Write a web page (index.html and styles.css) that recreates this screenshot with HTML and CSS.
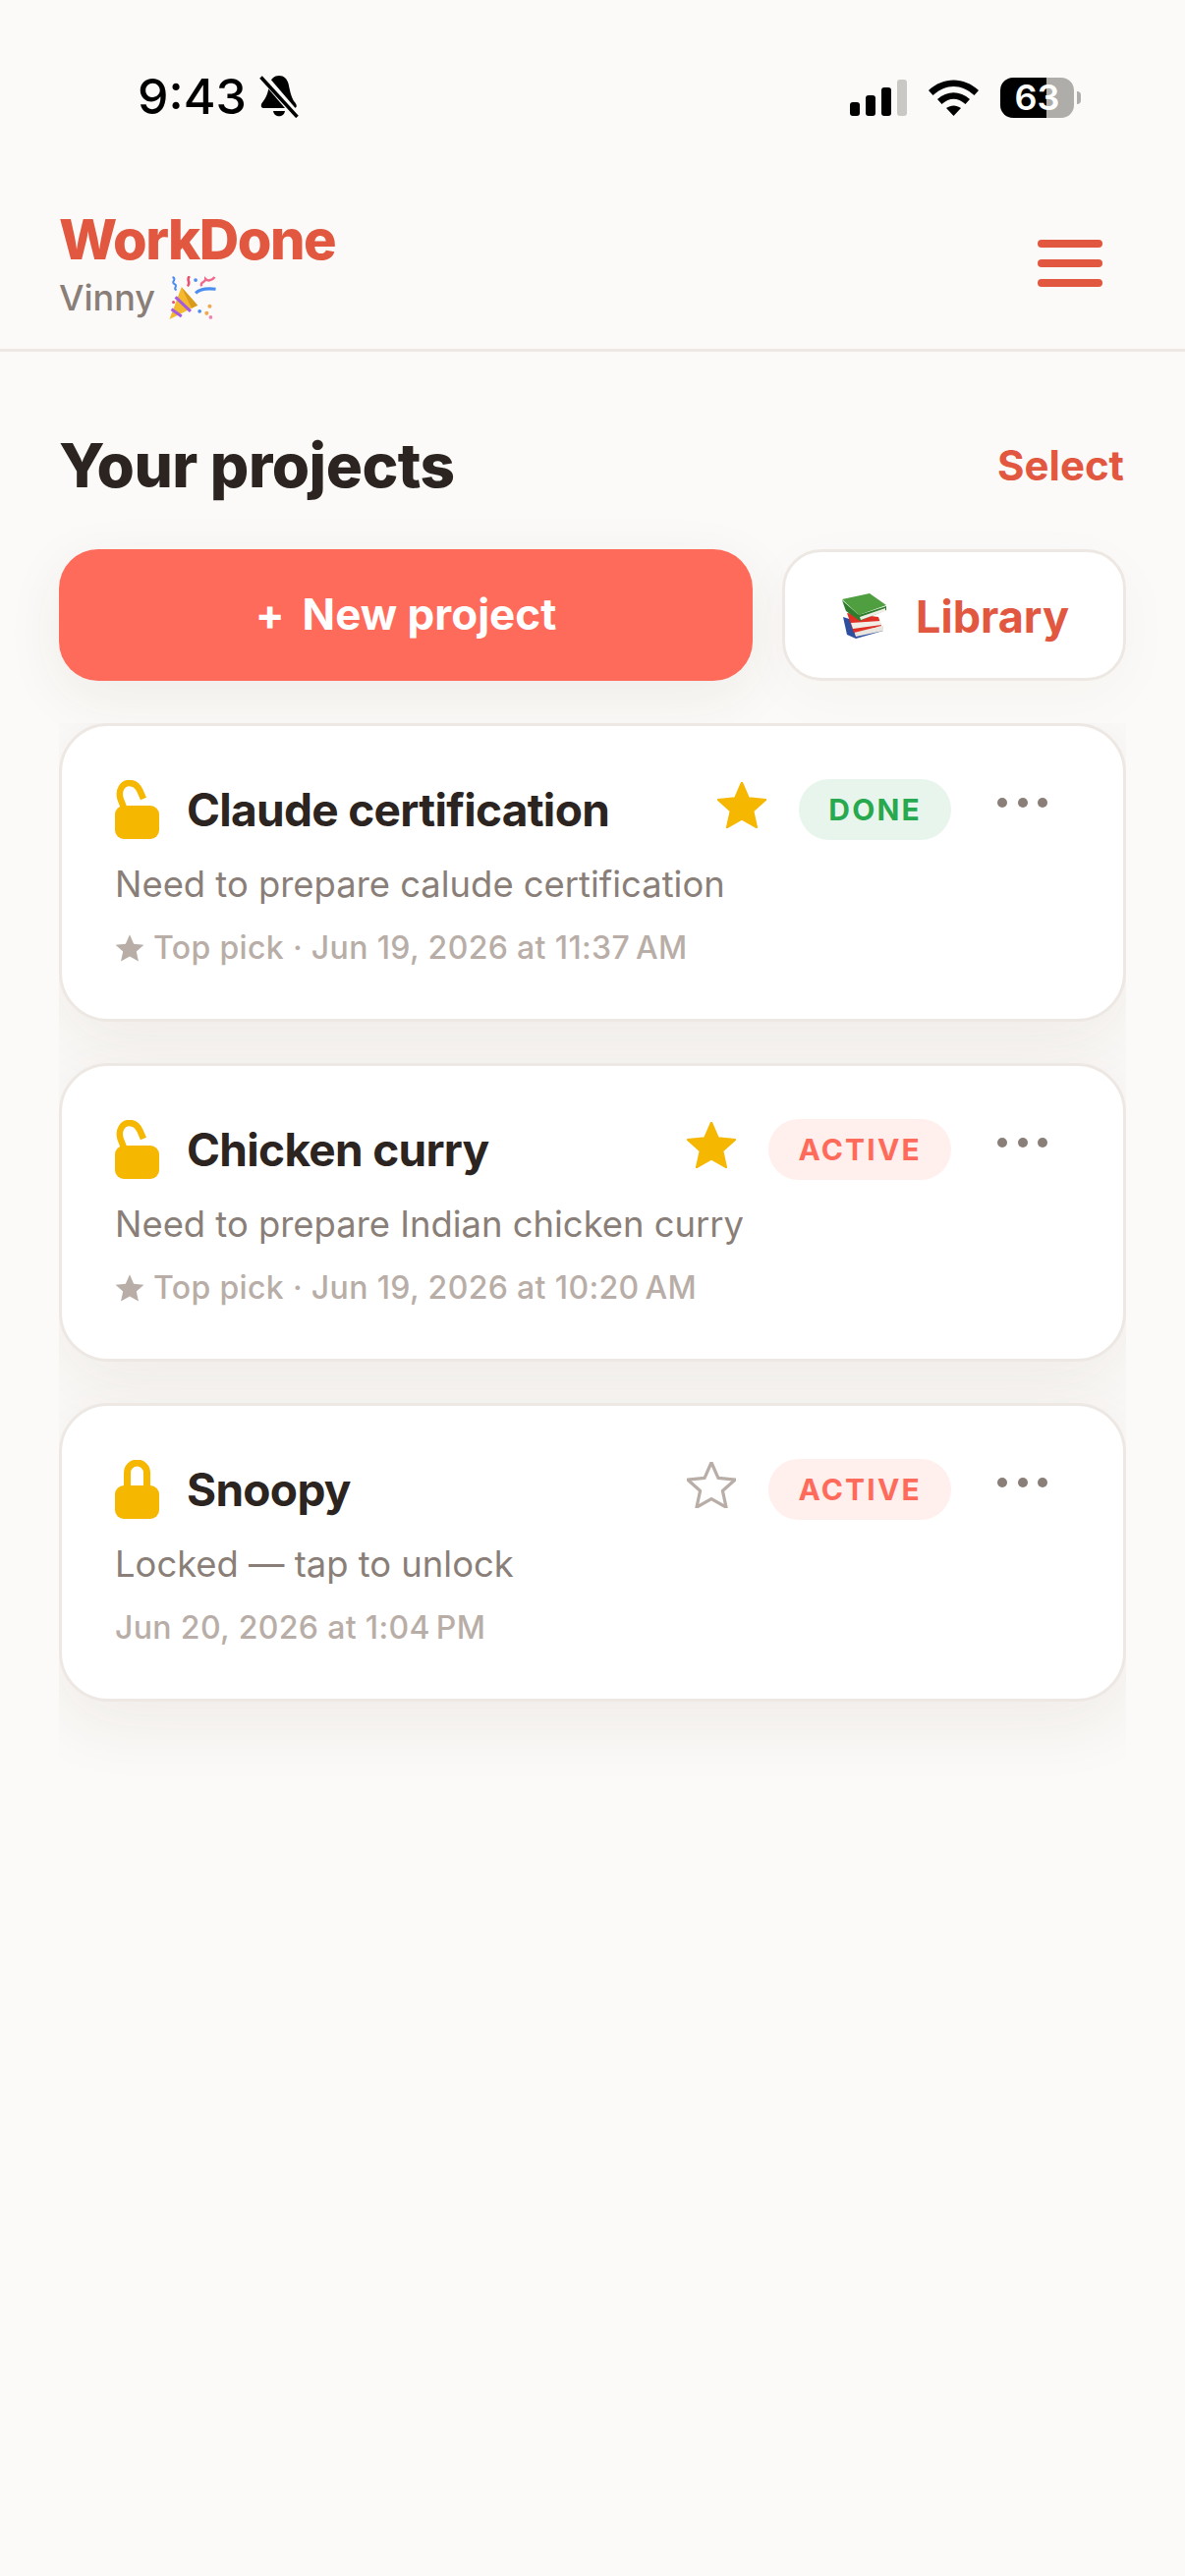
FILE: index.html

```html
<!DOCTYPE html>
<html lang="en">
<head>
    <meta charset="UTF-8">
    <meta name="viewport" content="width=device-width, initial-scale=1.0">
    <title>WorkDone</title>
    <link rel="stylesheet" href="styles.css">
</head>
<body>
    <svg class="defs" width="0" height="0">
        <symbol id="star" viewBox="2 2.300 20 19">
            <polygon points="12,2.500 14.800,8.900 21.800,9.600 16.600,14.200 18.100,21 12,17.500 5.900,21 7.400,14.200 2.200,9.600 9.200,8.900"/>
        </symbol>
        <symbol id="lockOpen" viewBox="0 0 45 60">
            <path d="M9 28 L5.500 19 C3 10 8 3 14.500 3 C20 3 23.500 6.500 25.500 11 L29 19" fill="none" stroke="#f5b700" stroke-width="6.500"/>
            <rect x="0" y="26" width="45" height="34" rx="9" fill="#f5b700"/>
        </symbol>
        <symbol id="lockClosed" viewBox="0 0 45 60">
            <path d="M12.500 30 V13 a10 10 0 0 1 20 0 V30" fill="none" stroke="#f5b700" stroke-width="7"/>
            <rect x="0" y="26" width="45" height="34" rx="9" fill="#f5b700"/>
        </symbol>
    </svg>

    <div class="status-bar">
        <div class="status-left">
            <span class="time">9:43</span>
            <svg class="bell" width="40" height="44" viewBox="0 0 40 44">
                <path d="M20 1 C25 1 28 4 29.500 9 C31 16 32 22 35 27 C38 30 39 33 36 34 H4 C1 34 1 30 4 27 C8 22 9 16 10.500 9 C12 4 15 1 20 1 Z"/>
                <path d="M14 37 H26 C25 44 15 44 14 37 Z"/>
                <line x1="3" y1="1" x2="39" y2="43" stroke="#fbfaf8" stroke-width="8"/>
                <line x1="1.500" y1="2.500" x2="38.500" y2="43" stroke="#000" stroke-width="3.500"/>
            </svg>
        </div>
        <div class="status-right">
            <svg width="58" height="37" viewBox="0 0 58 37">
                <rect x="0" y="23" width="10" height="14" rx="3"/>
                <rect x="16" y="16" width="10" height="21" rx="3"/>
                <rect x="32" y="8" width="10" height="29" rx="3"/>
                <rect x="48" y="0" width="10" height="37" rx="3" fill="#c9c8c5"/>
            </svg>
            <svg class="wifi" width="51" height="37" viewBox="0 0 51 37">
                <path d="M0 11 C15 -3 36 -3 51 11 L46.500 16 C33 4 18 4 4.500 16 Z"/>
                <path d="M9 20 C19 11 32 11 42 20 L37.500 25 C29.500 18 21.500 18 13.500 25 Z"/>
                <path d="M18 29 C23 25.500 28 25.500 33 29 L25.500 37 Z"/>
            </svg>
            <div class="battery-wrap">
                <div class="battery">63</div>
                <div class="battery-tip"></div>
            </div>
        </div>
    </div>

    <header class="app-header">
        <div>
            <div class="brand">WorkDone</div>
            <div class="user">
                <span>Vinny</span>
                <svg width="48" height="44" viewBox="0 0 46 43">
                    <polygon points="12,11 28,29 0,43" fill="#f4b92e"/>
                    <polygon points="12,11 20,20 28,29 22,32" fill="#d99a1c"/>
                    <path d="M6 21 L21 35" stroke="#a55be0" stroke-width="3" fill="none"/>
                    <path d="M2 33 L12 40" stroke="#a55be0" stroke-width="3" fill="none"/>
                    <path d="M26 17 C31 12 38 12 46 13" stroke="#4b8df0" stroke-width="3" fill="none"/>
                    <path d="M18 10 C22 6 16 4 20 0" stroke="#ef4f6e" stroke-width="2.500" fill="none"/>
                    <path d="M32 10 C30 5 36 7 36 3 C38 5 42 5 45 1" stroke="#ef6a8c" stroke-width="2.500" fill="none"/>
                    <path d="M3 1 C8 3 1 6 5 8 C9 10 3 12 7 14" stroke="#4b8df0" stroke-width="2" fill="none"/>
                    <circle cx="26" cy="4" r="1.800" fill="#4b8df0"/>
                    <circle cx="30" cy="35" r="1.800" fill="#4b8df0"/>
                    <circle cx="40" cy="30" r="2" fill="#f2a84e"/>
                    <circle cx="37" cy="37" r="2" fill="#f2a84e"/>
                    <circle cx="41" cy="41" r="1.800" fill="#ef82b0"/>
                    <circle cx="4" cy="26" r="1.500" fill="#ef4f6e"/>
                </svg>
            </div>
        </div>
        <div class="menu-btn">
            <span></span>
            <span></span>
            <span></span>
        </div>
    </header>

    <main class="content">
        <div class="title-row">
            <h1>Your projects</h1>
            <span class="select">Select</span>
        </div>

        <div class="actions">
            <button class="btn-new"><span class="plus">+</span>New project</button>
            <button class="btn-library">
                <svg width="46" height="46" viewBox="0 0 46 46">
                    <polygon points="2,24 34,34 43,38 15,46 6,42" fill="#2f4f9e"/>
                    <polygon points="13,38 43,33 43,38 15,44" fill="#e9e6e0"/>
                    <polygon points="6,20 38,24 41,33 13,40" fill="#e02f25"/>
                    <polygon points="10,30 40,28 41,32 12,36" fill="#f1eee8"/>
                    <polygon points="1,6 29,0 46,12 18,22" fill="#4f9e3f"/>
                    <polygon points="18,22 46,13 46,17 19,28 5,18 1,7" fill="#2f7d2c"/>
                    <polygon points="19,24 45,15 45,18 20,27" fill="#f1eee8"/>
                </svg>
                <span>Library</span>
            </button>
        </div>

        <div class="project-list">
            <div class="card">
                <div class="card-top">
                    <svg class="lock" width="45" height="60"><use href="#lockOpen"/></svg>
                    <div class="card-title">Claude certification</div>
                    <svg class="star" width="50" height="47"><use href="#star"/></svg>
                    <span class="badge done">DONE</span>
                    <div class="dots"><i></i><i></i><i></i></div>
                </div>
                <p class="desc">Need to prepare calude certification</p>
                <p class="meta"><svg width="30" height="28"><use href="#star"/></svg>Top pick · Jun 19, 2026 at 11:37&#8239;AM</p>
            </div>

            <div class="card">
                <div class="card-top">
                    <svg class="lock" width="45" height="60"><use href="#lockOpen"/></svg>
                    <div class="card-title">Chicken curry</div>
                    <svg class="star" width="50" height="47"><use href="#star"/></svg>
                    <span class="badge active">ACTIVE</span>
                    <div class="dots"><i></i><i></i><i></i></div>
                </div>
                <p class="desc">Need to prepare Indian chicken curry</p>
                <p class="meta"><svg width="30" height="28"><use href="#star"/></svg>Top pick · Jun 19, 2026 at 10:20&#8239;AM</p>
            </div>

            <div class="card">
                <div class="card-top">
                    <svg class="lock" width="45" height="60"><use href="#lockClosed"/></svg>
                    <div class="card-title">Snoopy</div>
                    <svg class="star empty" width="50" height="47"><use href="#star"/></svg>
                    <span class="badge active">ACTIVE</span>
                    <div class="dots"><i></i><i></i><i></i></div>
                </div>
                <p class="desc">Locked — tap to unlock</p>
                <p class="meta">Jun 20, 2026 at 1:04&#8239;PM</p>
            </div>
        </div>
    </main>
</body>
</html>
```

FILE: styles.css

```css
* {
    box-sizing: border-box;
}
body {
    font-family: Inter, "Noto Sans", sans-serif;
    margin: 0;
    background: #fbfaf8;
    color: #2b2420;
    min-height: 2622px;
}
.defs {
    display: block;
    height: 0;
}

/* status bar */
.status-bar {
    height: 190px;
    padding: 76px 106px 0 140px;
    display: flex;
    justify-content: space-between;
    align-items: flex-start;
}
.status-left {
    display: flex;
    align-items: center;
    gap: 13px;
}
.time {
    font-size: 50px;
    line-height: 43px;
    font-weight: 500;
    color: #000;
}
.status-right {
    display: flex;
    align-items: center;
    gap: 22px;
    padding-top: 3px;
}
.battery-wrap {
    display: flex;
    align-items: center;
    gap: 3px;
}
.battery {
    width: 75px;
    height: 41px;
    border-radius: 13px;
    background: linear-gradient(to right, #000 63%, #aeadaa 63%);
    color: #fff;
    font-size: 36px;
    font-weight: 600;
    line-height: 41px;
    text-align: center;
}
.battery-tip {
    width: 4px;
    height: 13px;
    border-radius: 0 6px 6px 0;
    background: #aeadaa;
}

/* header */
.app-header {
    padding: 24px 84px 30px 60px;
    border-bottom: 3px solid #ede8e3;
    display: flex;
    justify-content: space-between;
    align-items: center;
}
.brand {
    font-size: 56px;
    line-height: 60px;
    font-weight: 800;
    letter-spacing: -1.500px;
    color: #e2573f;
}
.user {
    margin-top: 7px;
    height: 44px;
    display: flex;
    align-items: center;
    gap: 14px;
    font-size: 36px;
    font-weight: 500;
    color: #8a7f78;
}
.menu-btn {
    width: 66px;
    display: flex;
    flex-direction: column;
    gap: 12px;
    margin-bottom: 3px;
}
.menu-btn span {
    height: 8px;
    border-radius: 4px;
    background: #e2573f;
}

/* content */
.content {
    padding: 79px 60px 0;
}
.title-row {
    display: flex;
    justify-content: space-between;
    align-items: center;
    height: 72px;
}
h1 {
    margin: 0;
    font-size: 62px;
    font-weight: 800;
    letter-spacing: -0.500px;
}
.select {
    font-size: 42px;
    font-weight: 700;
    color: #e2573f;
    padding-right: 2px;
}
.actions {
    margin-top: 50px;
    display: flex;
    gap: 30px;
}
button {
    height: 134px;
    border-radius: 40px;
    font-family: inherit;
    font-weight: 700;
    display: flex;
    align-items: center;
    justify-content: center;
    cursor: pointer;
}
.btn-new {
    width: 706px;
    padding-bottom: 4px;
    border: none;
    background: #ff6b5b;
    color: #fff;
    font-size: 44px;
    box-shadow: 0 16px 60px rgba(90, 50, 30, 0.07);
}
.plus {
    margin-right: 18px;
}
.btn-library {
    width: 350px;
    padding: 2px 0 0 2px;
    border: 3px solid #ede8e3;
    background: #fff;
    color: #e2573f;
    font-size: 45px;
    gap: 30px;
    box-shadow: 0 16px 60px rgba(90, 50, 30, 0.03);
}

/* project cards */
.project-list {
    margin-top: 43px;
    padding-bottom: 96px;
    overflow: hidden;
    display: flex;
    flex-direction: column;
    gap: 42px;
}
.card {
    height: 304px;
    background: #fff;
    border: 3px solid #ede8e3;
    border-radius: 50px;
    padding: 54px 77px 54px 54px;
    box-shadow: 0 20px 70px rgba(90, 50, 30, 0.08);
}
.card-top {
    height: 62px;
    display: flex;
    align-items: center;
}
.lock {
    flex-shrink: 0;
}
.card-title {
    flex: 1;
    margin-left: 28px;
    font-size: 46px;
    font-weight: 700;
    letter-spacing: -0.700px;
    white-space: nowrap;
}
.star {
    fill: #f5b700;
    stroke: #f5b700;
    stroke-width: 0.800;
    stroke-linejoin: round;
    overflow: visible;
    margin-right: 33px;
    margin-bottom: 10px;
}
.star.empty {
    fill: #fff;
    stroke: #b8aea7;
    stroke-width: 1.300;
}
.badge {
    height: 62px;
    line-height: 62px;
    padding: 0 30px;
    border-radius: 31px;
    font-size: 30px;
    font-weight: 700;
    letter-spacing: 2.200px;
    margin-right: 47px;
}
.badge.done {
    background: #e8f5ec;
    color: #28a84f;
}
.badge.active {
    background: #fff0ee;
    color: #ff6b5b;
}
.dots {
    width: 51px;
    display: flex;
    justify-content: space-between;
    margin-bottom: 14px;
}
.dots i {
    width: 10px;
    height: 10px;
    border-radius: 50%;
    background: #8a7f78;
}
.desc {
    margin: 20px 0 0;
    font-size: 36.400px;
    line-height: 50px;
    color: #8a7f78;
}
.meta {
    margin: 20px 0 0;
    height: 40px;
    display: flex;
    align-items: center;
    gap: 9px;
    font-size: 32px;
    line-height: 40px;
    font-weight: 500;
    letter-spacing: 0.350px;
    color: #b8aea7;
}
.meta svg {
    fill: #b8aea7;
}
```
